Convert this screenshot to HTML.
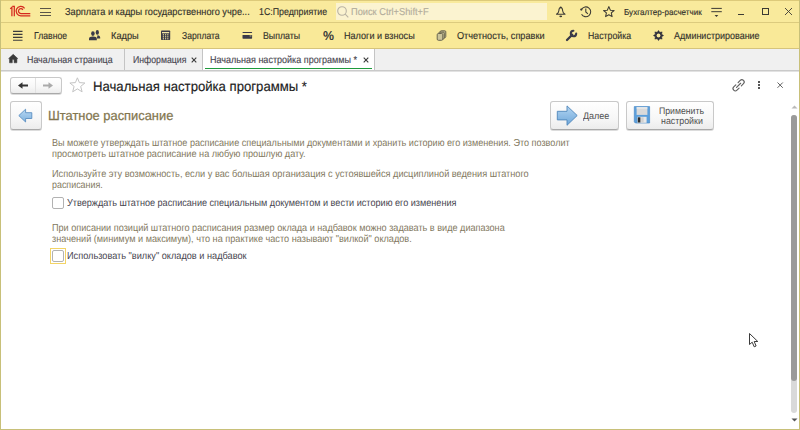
<!DOCTYPE html>
<html><head><meta charset="utf-8">
<style>
*{margin:0;padding:0;box-sizing:border-box}
html,body{width:800px;height:430px;overflow:hidden;background:#fff;font-family:"Liberation Sans",sans-serif}
.a{position:absolute}
.t{position:absolute;white-space:pre;line-height:normal;font-family:"Liberation Sans",sans-serif;text-rendering:geometricPrecision}
.btn{position:absolute;border:1px solid #c9c9c9;border-bottom-color:#a9a9a9;border-radius:3px;background:linear-gradient(#ffffff,#f7f7f7 60%,#ececec);box-shadow:0 1px 0 #dcdcdc}
</style></head><body>
<!-- title bar -->
<div class="a" style="left:0;top:0;width:800px;height:22px;background:#f9ea9c;border-top:1px solid #ddca7a"></div>
<div class="a" style="left:0;top:22px;width:800px;height:1px;background:#dccb7e"></div>
<!-- menu bar -->
<div class="a" style="left:0;top:23px;width:800px;height:25px;background:#f9e998"></div>
<div class="a" style="left:0;top:48px;width:800px;height:1px;background:#d6c47c"></div>
<!-- tabs bar -->
<div class="a" style="left:0;top:49px;width:800px;height:21px;background:#f0f0f0"></div>
<div class="a" style="left:203px;top:49px;width:171px;height:21px;background:#ffffff"></div>
<div class="a" style="left:124px;top:49px;width:1px;height:22px;background:#c4c4c4"></div>
<div class="a" style="left:202px;top:49px;width:1px;height:22px;background:#c4c4c4"></div>
<div class="a" style="left:374px;top:49px;width:1px;height:22px;background:#c4c4c4"></div>
<div class="a" style="left:205px;top:67.8px;width:167px;height:1.5px;background:#1e9a3c"></div>
<div class="a" style="left:0;top:70px;width:800px;height:1px;background:#cacaca"></div><div class="a" style="left:0;top:71px;width:800px;height:1px;background:#e2e2e2"></div>

<!-- 1C logo -->
<svg class="a" style="left:0;top:0" width="40" height="22" viewBox="0 0 40 22">
  <g fill="none" stroke="#d52a1f" stroke-width="1.25">
    <path d="M11.9 16.3 V7.2 L10.2 8.9"/>
    <path d="M14.3 16.3 V6.4 H12.4"/>
    <path d="M24.6 8.3 A4.7 4.7 0 1 0 21 15.8 H30.3"/>
    <path d="M22.9 9.8 A2.4 2.4 0 1 0 21 13.5 H30.3"/>
  </g>
</svg>
<!-- title hamburger -->
<svg class="a" style="left:40px;top:7px" width="11" height="10" viewBox="0 0 11 10" shape-rendering="crispEdges"><path d="M0 1.5H10.5M0 5.5H10.5M0 8.5H10.5" stroke="#5a5548" stroke-width="1"/></svg>
<!-- search box -->
<div class="a" style="left:336px;top:3px;width:211px;height:17px;background:#fbf3d0"></div>
<svg class="a" style="left:336px;top:5px" width="14" height="14" viewBox="0 0 14 14"><g fill="none" stroke="#b9b3a3" stroke-width="1.1"><circle cx="6" cy="6" r="4.3"/><path d="M9.2 9.2 L12.3 12.3"/></g></svg>
<!-- bell -->
<svg class="a" style="left:552px;top:2px" width="20" height="18" viewBox="0 0 20 18"><path d="M8.7 5.6 C7.3 5.8 6.9 7.4 6.8 9 C6.7 10.6 6 11.3 4.5 12.3 H13 C11.5 11.3 10.8 10.6 10.7 9 C10.6 7.4 10.2 5.8 8.7 5.6Z" fill="none" stroke="#3c3a34" stroke-width="1.05" stroke-linejoin="round"/><circle cx="8.75" cy="5.3" r="0.9" fill="#3c3a34"/><ellipse cx="8.75" cy="14.3" rx="1.4" ry="0.9" fill="#3c3a34"/></svg>
<!-- history -->
<svg class="a" style="left:576px;top:2px" width="20" height="18" viewBox="0 0 20 18"><g fill="none" stroke="#3c3a34" stroke-width="1.05"><path d="M5.56 7.35 A4.9 4.9 0 1 1 5.56 12.25"/><path d="M9.8 6.6 V10 L11.9 11.9"/></g><circle cx="5.3" cy="7.6" r="1.15" fill="#3c3a34"/></svg>
<!-- star -->
<svg class="a" style="left:600px;top:2px" width="20" height="18" viewBox="0 0 20 18"><path d="M8.85 4.6 L10.4 8.2 L14.1 8.5 L11.3 10.9 L12.1 14.6 L8.85 12.7 L5.6 14.6 L6.4 10.9 L3.6 8.5 L7.3 8.2Z" fill="none" stroke="#3c3a34" stroke-width="1.05" stroke-linejoin="round"/></svg>
<!-- filter icon -->
<svg class="a" style="left:707px;top:2px" width="20" height="18" viewBox="0 0 20 18"><g stroke="#3c3a34" stroke-width="1"><path d="M4.3 6.4H14.8M4.3 9.7H14.8"/></g><path d="M7.6 13 H11.3 L9.45 15Z" fill="#3c3a34"/></svg>
<!-- window controls -->
<div class="a" style="left:738px;top:14px;width:6px;height:1px;background:#3c3a34"></div>
<div class="a" style="left:762px;top:8px;width:7px;height:7px;border:1px solid #3c3a34"></div>
<svg class="a" style="left:784px;top:7px" width="9" height="9" viewBox="0 0 9 9"><path d="M1 1 L8 8 M8 1 L1 8" stroke="#3c3a34" stroke-width="0.9"/></svg>

<!-- menu icons -->
<svg class="a" style="left:13px;top:30px" width="10" height="11" viewBox="0 0 10 11"><path d="M0 1.3H9.5M0 4.3H9.5M0 7.3H9.5M0 10.2H9.5" stroke="#3c3c3c" stroke-width="1.15"/></svg>
<svg class="a" style="left:84px;top:26px" width="20" height="18" viewBox="0 0 20 18"><g fill="#3a3a48"><ellipse cx="13.3" cy="6.4" rx="1.6" ry="2.3"/><path d="M13.5 9.2 C15.3 9.3 16.2 10.2 16.2 11.6 V12.6 H12.8 C13.1 11.4 13.2 10.3 13.5 9.2Z"/><ellipse cx="8.9" cy="7.6" rx="1.8" ry="2.3"/><path d="M5 14.2 V12.9 C5 11.3 6.3 10.5 8.9 10.5 C11.5 10.5 12.8 11.3 12.8 12.9 V14.2Z"/></g></svg>
<svg class="a" style="left:156px;top:26px" width="20" height="18" viewBox="0 0 20 18"><rect x="5" y="4.4" width="9.2" height="9.6" rx="0.8" fill="#3a3a48"/><rect x="6" y="6" width="7.2" height="1.3" fill="#f3e7a6"/><g fill="#e6dc9a"><rect x="6.8" y="8.2" width="1.2" height="1.2"/><rect x="9" y="8.2" width="1.2" height="1.2"/><rect x="11.2" y="8.2" width="1.2" height="1.2"/><rect x="6.8" y="10.2" width="1.2" height="1.2"/><rect x="9" y="10.2" width="1.2" height="1.2"/><rect x="11.2" y="10.2" width="1.2" height="1.2"/><rect x="6.8" y="12.2" width="1.2" height="1.2"/><rect x="9" y="12.2" width="1.2" height="1.2"/><rect x="11.2" y="12.2" width="1.2" height="1.2"/></g></svg>
<svg class="a" style="left:238px;top:26px" width="20" height="18" viewBox="0 0 20 18"><rect x="4.5" y="6" width="9.6" height="1.1" rx="0.5" fill="#3a3a48"/><rect x="4.5" y="9" width="9.6" height="3.7" rx="0.6" fill="#3a3a48"/><rect x="11.6" y="9.4" width="1.8" height="1.1" fill="#a9a67c"/></svg>
<div class="t" style="left:322.5px;top:28px;font-size:13px;font-weight:bold;color:#3a3a3a;transform:scaleX(0.95);transform-origin:0 0">%</div>
<svg class="a" style="left:432px;top:26px" width="20" height="18" viewBox="0 0 20 18"><g stroke="#6a6750" stroke-width="1"><rect x="8.2" y="4.8" width="5.6" height="6.8" rx="1" fill="#bdb68c"/><rect x="6.7" y="6.2" width="5.6" height="6.8" rx="1" fill="#c4bd92"/><rect x="5.2" y="7.5" width="5.6" height="6.8" rx="1.2" fill="#cbc49a"/></g></svg>
<svg class="a" style="left:562px;top:26px" width="20" height="18" viewBox="0 0 20 18"><path d="M10.2 8.8 L5 14" stroke="#3a3a48" stroke-width="2.3" stroke-linecap="round"/><path d="M14.2 7.6 A2.7 2.7 0 1 1 11.4 4.8" fill="none" stroke="#3a3a48" stroke-width="2.1" stroke-linecap="round"/></svg>
<svg class="a" style="left:648px;top:26px" width="20" height="18" viewBox="0 0 20 18"><polygon points="10.50,4.40 11.80,6.36 14.11,5.89 13.64,8.20 15.60,9.50 13.64,10.80 14.11,13.11 11.80,12.64 10.50,14.60 9.20,12.64 6.89,13.11 7.36,10.80 5.40,9.50 7.36,8.20 6.89,5.89 9.20,6.36" fill="#30303c" stroke="#30303c" stroke-width="0.5" stroke-linejoin="round"/><circle cx="10.5" cy="9.5" r="1.9" fill="#f9e998"/></svg>

<!-- tab icons -->
<svg class="a" style="left:4px;top:50px" width="20" height="18" viewBox="0 0 20 18"><path d="M9.2 4.3 L13.8 8.6 H12.9 V12.8 H10.1 V9.6 H8.3 V12.8 H5.5 V8.6 H4.6Z" fill="#3a3a3a" stroke="#3a3a3a" stroke-width="0.5" stroke-linejoin="round"/></svg>
<svg class="a" style="left:191px;top:57px" width="6" height="6" viewBox="0 0 6 6"><path d="M0.7 0.7 L5.3 5.3 M5.3 0.7 L0.7 5.3" stroke="#3a3a3a" stroke-width="1.1"/></svg>
<svg class="a" style="left:363px;top:57px" width="6" height="6" viewBox="0 0 6 6"><path d="M0.7 0.7 L5.3 5.3 M5.3 0.7 L0.7 5.3" stroke="#3a3a3a" stroke-width="1.1"/></svg>

<!-- form header -->
<div class="btn" style="left:10px;top:77px;width:52px;height:17px"></div>
<div class="a" style="left:35px;top:78px;width:1px;height:15px;background:#e2e2e2"></div>
<svg class="a" style="left:10px;top:75px" width="54" height="22" viewBox="0 0 54 22"><path d="M11.5 10.5 H18" stroke="#333" stroke-width="2"/><path d="M8 10.5 L12.5 7.2 V13.8Z" fill="#333"/><path d="M33 10.5 H39.5" stroke="#aaa" stroke-width="2"/><path d="M43 10.5 L38.5 7.2 V13.8Z" fill="#aaa"/></svg>
<svg class="a" style="left:64px;top:73px" width="26" height="23" viewBox="0 0 26 23"><path d="M13.4 4.8 L15.4 9.6 L20.9 10 L16.7 13.4 L18.1 18.8 L13.4 15.9 L8.7 18.8 L10.1 13.4 L5.9 10 L11.4 9.6Z" fill="none" stroke="#c4c4c4" stroke-width="1" stroke-linejoin="round"/></svg>
<svg class="a" style="left:728px;top:76px" width="22" height="18" viewBox="0 0 22 18"><g transform="translate(10.6 9.3) rotate(-45)" fill="none" stroke="#606060" stroke-width="1.15" stroke-linecap="round"><path d="M-1.6 -2.3 H-4.6 A2.3 2.3 0 0 0 -4.6 2.3 H-1.6"/><path d="M1.6 -2.3 H4.6 A2.3 2.3 0 0 1 4.6 2.3 H1.6"/><path d="M-2.9 0 H2.9"/></g></svg>
<svg class="a" style="left:757px;top:80px" width="4" height="10" viewBox="0 0 4 10"><g fill="#555"><rect x="1" y="1" width="2" height="2"/><rect x="1" y="4" width="2" height="2"/><rect x="1" y="7" width="2" height="2"/></g></svg>
<svg class="a" style="left:776px;top:81px" width="8" height="8" viewBox="0 0 8 8"><path d="M1.5 1.5 L6.8 6.8 M6.8 1.5 L1.5 6.8" stroke="#5a5a5a" stroke-width="0.95"/></svg>

<!-- back button -->
<div class="btn" style="left:9.5px;top:101px;width:32px;height:28.5px"></div>
<svg class="a" style="left:6px;top:98px" width="40" height="34" viewBox="0 0 40 34"><defs><linearGradient id="gb" x1="0" y1="0" x2="0" y2="1"><stop offset="0" stop-color="#b8d8f3"/><stop offset="1" stop-color="#7fb2de"/></linearGradient></defs><path d="M12.8 17.6 L19.6 11.2 V14.7 H25.8 V20.5 H19.6 V24 Z" fill="url(#gb)" stroke="#5b90c2" stroke-width="0.9" stroke-linejoin="round"/></svg>

<!-- Далее button -->
<div class="btn" style="left:550px;top:101px;width:69px;height:28.5px"></div>
<svg class="a" style="left:552px;top:101px" width="30" height="28" viewBox="0 0 30 28"><defs><linearGradient id="ga" x1="0" y1="0" x2="0" y2="1"><stop offset="0" stop-color="#b3d5f2"/><stop offset="1" stop-color="#6ea7d9"/></linearGradient></defs><path d="M5.3 10.3 H15 V4.9 L25.2 14.5 L15 24.3 V18.9 H5.3Z" fill="url(#ga)" stroke="#4f86ba" stroke-width="0.9" stroke-linejoin="round"/></svg>
<!-- Применить button -->
<div class="btn" style="left:626px;top:101px;width:88px;height:28.5px"></div>
<svg class="a" style="left:628px;top:101px" width="28" height="28" viewBox="0 0 28 28"><path d="M6.3 5.6 H21.6 V22 H7.4 L6.3 20.9Z" fill="#5c9fdb" stroke="#4a8ac6" stroke-width="0.7"/><rect x="8.6" y="6.3" width="10.8" height="7.6" fill="#dadada"/><rect x="8.6" y="6.3" width="10.8" height="1.2" fill="#f2f2f2"/><rect x="9.4" y="15.8" width="9.2" height="6" fill="#e8e8e8"/><rect x="9.8" y="16.3" width="2.6" height="5.2" fill="#2e2e2e"/><rect x="13.2" y="16.3" width="2.4" height="5.2" fill="#d0d0d0"/></svg>

<!-- checkboxes -->
<div class="a" style="left:52px;top:197px;width:11.5px;height:11.5px;border:1px solid #b2b2b2;border-radius:2px;background:#fff"></div>
<div class="a" style="left:49.5px;top:248px;width:16px;height:16px;border:1px solid #f3d466;background:#fff"></div>
<div class="a" style="left:52px;top:250px;width:11.5px;height:11.5px;border:1px solid #b2b2b2;border-radius:2px;background:#fff"></div>

<!-- scrollbar -->
<svg class="a" style="left:791px;top:105px" width="7" height="4" viewBox="0 0 7 4"><path d="M0.5 3.5 L3.5 0.5 L6.5 3.5Z" fill="#b9b9b9"/></svg>
<div class="a" style="left:791px;top:115px;width:6px;height:298px;border-radius:3px;background:#d9d9d9"></div>
<div class="a" style="left:791px;top:115px;width:6px;height:266px;border-radius:3px;background:#9a9a9a"></div>
<svg class="a" style="left:791px;top:418px" width="7" height="4" viewBox="0 0 7 4"><path d="M0.5 0.5 L3.5 3.5 L6.5 0.5Z" fill="#555"/></svg>

<!-- mouse cursor -->
<svg class="a" style="left:748px;top:332px" width="12" height="17" viewBox="0 0 12 17"><path d="M1.5 1.5 V12.5 L4.2 10.2 L6.2 14.8 L8.1 14 L6.2 9.5 L9.8 9.5Z" fill="#fff" stroke="#3a3a3a" stroke-width="1" stroke-linejoin="round"/></svg>

<div class="t" style="left:65.00px;top:7.00px;font-size:10px;letter-spacing:0.000px;transform:scaleX(0.9215);transform-origin:0 0;color:#34322c;font-weight:normal;-webkit-text-stroke:0.15px #34322c;">Зарплата и кадры государственного учре...</div>
<div class="t" style="left:258.50px;top:7.00px;font-size:10px;letter-spacing:0.000px;transform:scaleX(0.8824);transform-origin:0 0;color:#34322c;font-weight:normal;-webkit-text-stroke:0.15px #34322c;">1С:Предприятие</div>
<div class="t" style="left:351.00px;top:7.00px;font-size:10px;letter-spacing:0.000px;transform:scaleX(0.9256);transform-origin:0 0;color:#b3ad9c;font-weight:normal;-webkit-text-stroke:0.15px #b3ad9c;">Поиск Ctrl+Shift+F</div>
<div class="t" style="left:624.00px;top:6.50px;font-size:8.6px;letter-spacing:0.000px;transform:scaleX(0.9399);transform-origin:0 0;color:#34322c;font-weight:normal;-webkit-text-stroke:0.15px #34322c;">Бухгалтер-расчетчик</div>
<div class="t" style="left:33.50px;top:31.00px;font-size:10px;letter-spacing:0.000px;transform:scaleX(0.8668);transform-origin:0 0;color:#34322c;font-weight:normal;-webkit-text-stroke:0.15px #34322c;">Главное</div>
<div class="t" style="left:110.50px;top:31.00px;font-size:10px;letter-spacing:0.000px;transform:scaleX(0.9233);transform-origin:0 0;color:#34322c;font-weight:normal;-webkit-text-stroke:0.15px #34322c;">Кадры</div>
<div class="t" style="left:181.50px;top:31.00px;font-size:10px;letter-spacing:0.000px;transform:scaleX(0.8593);transform-origin:0 0;color:#34322c;font-weight:normal;-webkit-text-stroke:0.15px #34322c;">Зарплата</div>
<div class="t" style="left:263.00px;top:31.00px;font-size:10px;letter-spacing:0.000px;transform:scaleX(0.8803);transform-origin:0 0;color:#34322c;font-weight:normal;-webkit-text-stroke:0.15px #34322c;">Выплаты</div>
<div class="t" style="left:343.50px;top:31.00px;font-size:10px;letter-spacing:0.000px;transform:scaleX(0.9092);transform-origin:0 0;color:#34322c;font-weight:normal;-webkit-text-stroke:0.15px #34322c;">Налоги и взносы</div>
<div class="t" style="left:457.00px;top:31.00px;font-size:10px;letter-spacing:0.000px;transform:scaleX(0.9155);transform-origin:0 0;color:#34322c;font-weight:normal;-webkit-text-stroke:0.15px #34322c;">Отчетность, справки</div>
<div class="t" style="left:587.50px;top:31.00px;font-size:10px;letter-spacing:0.000px;transform:scaleX(0.8758);transform-origin:0 0;color:#34322c;font-weight:normal;-webkit-text-stroke:0.15px #34322c;">Настройка</div>
<div class="t" style="left:674.00px;top:31.00px;font-size:10px;letter-spacing:0.000px;transform:scaleX(0.8978);transform-origin:0 0;color:#34322c;font-weight:normal;-webkit-text-stroke:0.15px #34322c;">Администрирование</div>
<div class="t" style="left:26.50px;top:55.00px;font-size:10px;letter-spacing:0.000px;transform:scaleX(0.8848);transform-origin:0 0;color:#4a4852;font-weight:normal;-webkit-text-stroke:0.15px #4a4852;">Начальная страница</div>
<div class="t" style="left:132.50px;top:55.00px;font-size:10px;letter-spacing:0.000px;transform:scaleX(0.8716);transform-origin:0 0;color:#4a4852;font-weight:normal;-webkit-text-stroke:0.15px #4a4852;">Информация</div>
<div class="t" style="left:210.00px;top:55.00px;font-size:10px;letter-spacing:0.000px;transform:scaleX(0.9019);transform-origin:0 0;color:#4a4852;font-weight:normal;-webkit-text-stroke:0.15px #4a4852;">Начальная настройка программы *</div>
<div class="t" style="left:92.83px;top:78.60px;font-size:13.6px;letter-spacing:0.000px;transform:scaleX(0.9664);transform-origin:0 0;color:#1c1c1c;font-weight:normal;-webkit-text-stroke:0.15px #1c1c1c;">Начальная настройка программы *</div>
<div class="t" style="left:48.02px;top:107.80px;font-size:13.2px;letter-spacing:0.000px;transform:scaleX(0.9762);transform-origin:0 0;color:#83764f;font-weight:normal;-webkit-text-stroke:0.25px #83764f;">Штатное расписание</div>
<div class="t" style="left:583.00px;top:110.50px;font-size:9.6px;letter-spacing:0.000px;transform:scaleX(0.9364);transform-origin:0 0;color:#505050;font-weight:normal;">Далее</div>
<div class="t" style="left:659.00px;top:105.50px;font-size:9.6px;letter-spacing:0.000px;transform:scaleX(0.9078);transform-origin:0 0;color:#505050;font-weight:normal;">Применить</div>
<div class="t" style="left:660.50px;top:115.50px;font-size:9.6px;letter-spacing:0.000px;transform:scaleX(0.9212);transform-origin:0 0;color:#505050;font-weight:normal;">настройки</div>
<div class="t" style="left:52.00px;top:138.00px;font-size:10.2px;letter-spacing:0.000px;transform:scaleX(0.8913);transform-origin:0 0;color:#82785e;font-weight:normal;">Вы можете утверждать штатное расписание специальными документами и хранить историю его изменения. Это позволит</div>
<div class="t" style="left:52.00px;top:149.00px;font-size:10.2px;letter-spacing:0.000px;transform:scaleX(0.8986);transform-origin:0 0;color:#82785e;font-weight:normal;">просмотреть штатное расписание на любую прошлую дату.</div>
<div class="t" style="left:52.00px;top:168.50px;font-size:10.2px;letter-spacing:0.000px;transform:scaleX(0.9011);transform-origin:0 0;color:#82785e;font-weight:normal;">Используйте эту возможность, если у вас большая организация с устоявшейся дисциплиной ведения штатного</div>
<div class="t" style="left:52.00px;top:179.50px;font-size:10.2px;letter-spacing:0.000px;transform:scaleX(0.8737);transform-origin:0 0;color:#82785e;font-weight:normal;">расписания.</div>
<div class="t" style="left:67.00px;top:198.00px;font-size:10.2px;letter-spacing:0.000px;transform:scaleX(0.8932);transform-origin:0 0;color:#46444e;font-weight:normal;">Утверждать штатное расписание специальным документом и вести историю его изменения</div>
<div class="t" style="left:52.00px;top:222.50px;font-size:10.2px;letter-spacing:0.000px;transform:scaleX(0.8949);transform-origin:0 0;color:#82785e;font-weight:normal;">При описании позиций штатного расписания размер оклада и надбавок можно задавать в виде диапазона</div>
<div class="t" style="left:52.00px;top:233.50px;font-size:10.2px;letter-spacing:0.000px;transform:scaleX(0.8975);transform-origin:0 0;color:#82785e;font-weight:normal;">значений (минимум и максимум), что на практике часто называют &quot;вилкой&quot; окладов.</div>
<div class="t" style="left:67.00px;top:251.00px;font-size:10.2px;letter-spacing:0.000px;transform:scaleX(0.9007);transform-origin:0 0;color:#46444e;font-weight:normal;">Использовать &quot;вилку&quot; окладов и надбавок</div>

<!-- window frame -->
<div class="a" style="left:0;top:0;width:1px;height:430px;background:#c8c079"></div>
<div class="a" style="left:799px;top:0;width:1px;height:430px;background:#c8c079"></div>
<div class="a" style="left:0;top:429px;width:800px;height:1px;background:#c8c079"></div>
</body></html>
